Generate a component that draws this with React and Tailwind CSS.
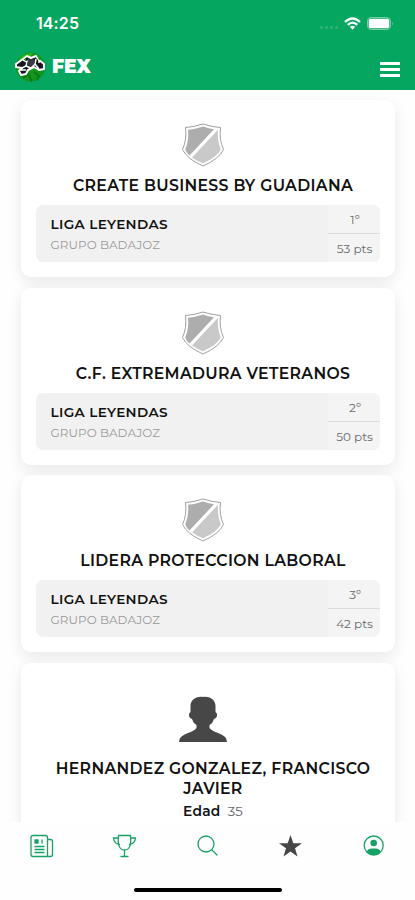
import React from "react";

const teams = [
  { name: "CREATE BUSINESS BY GUADIANA", position: "1º", points: "53 pts" },
  { name: "C.F. EXTREMADURA VETERANOS", position: "2º", points: "50 pts" },
  { name: "LIDERA PROTECCION LABORAL", position: "3º", points: "42 pts" },
];

function Ball() {
  return (
    <svg className="h-8 w-8" viewBox="0 0 32 32">
      <circle cx="16.5" cy="16" r="14.5" fill="#14941b" />
      <path d="M5 8q5-7 14-6l-3 4-8 4zM23 4l6 8-5-3z" fill="#22b719" />
      <path d="M9 27l5-4 4 7M20 21l5 4-2 4" fill="none" stroke="#087a17" strokeWidth="2" />
      <path d="M2 13L9 8L13 5L17 7L22 5L25 9L30 13L30 18L25 19L20 16L14 19L12 23L7 24L5 20L8 17L2 16Z" fill="#17181f" stroke="#fff" strokeWidth="2" strokeLinejoin="round" />
      <path d="M9 9L13 11L12 15L6 18M13 11L15 9M22 8L21 13L25 18M21 13L17 17L12 15M7 19L12 19M25 9L25 12" fill="none" stroke="#fff" strokeWidth="1.5" />
      <path d="M14 9L17 8L21 9L20 13L17 15L13 14Z" fill="#3a3c43" />
      <path d="M23 5L25 4L27 9L25 9ZM10 9L12 7L12 10Z" fill="#17a01c" />
    </svg>
  );
}

function Shield() {
  return (
    <svg className="h-[44px] w-[44px]" viewBox="0 0 44 44">
      <path d="M4.5 4.5Q13 4 22 1Q31 4 39.5 4.5Q38 17 42.5 26.5Q38 36 22 43Q6 36 1.5 26.5Q6 17 4.5 4.5Z" fill="#fff" stroke="#a0a0a0" strokeWidth="1" />
      <path d="M7 6.7Q15 6 22 3.5Q28 5.5 33 6.2L8.5 32.5Q5.5 30 4.2 26.5Q8.2 17 7 6.7Z" fill="#adadad" />
      <path d="M37 6.7Q36 17 39.8 26.5Q36 34 22 40.3Q16 38 11 34.5Z" fill="#c9c9c9" />
    </svg>
  );
}

function TeamCard({ team }) {
  return (
    <article className="flex h-[177px] shrink-0 flex-col rounded-[10px] bg-white px-[15px] pt-[23px] shadow-[0_5px_16px_rgba(0,0,0,0.09)]">
      <div className="flex h-[44px] justify-center pr-[11px]"><Shield /></div>
      <h2 className="mt-[9px] h-5 whitespace-nowrap pl-[10px] text-center text-[15.7px] leading-5 font-semibold tracking-[0.33px] text-[#111]">{team.name}</h2>
      <div className="mt-[9px] flex h-[57px] w-[344px] overflow-hidden rounded-[7px] bg-[#f1f1f1]">
        <div className="flex flex-1 flex-col pt-[9px] pl-[14.5px]">
          <span className="text-[13.6px] leading-[20px] font-semibold tracking-[0.35px] text-[#111]">LIGA LEYENDAS</span>
          <span className="mt-[2px] text-[11.9px] leading-[18px] tracking-[0.1px] text-[#999]">GRUPO BADAJOZ</span>
        </div>
        <div className="flex w-[52px] flex-col bg-[#f4f4f4] text-center text-[12px] text-[#686868]">
          <span className="h-[29px] border-b border-[#dcdcdc] pl-[2px] leading-[29px]">{team.position}</span>
          <span className="h-[28px] pl-px leading-[29px]">{team.points}</span>
        </div>
      </div>
    </article>
  );
}

function Header() {
  return (
    <header className="h-[90px] shrink-0 bg-[#04a660] text-white">
      <div className="flex h-[46px] items-center justify-between pr-[21px] pl-[36px]">
        <span className="font-['Inter',sans-serif] text-[16px] font-semibold tracking-[0.1px]">14:25</span>
        <div className="flex items-center">
          <div className="mt-2 mr-[6px] flex gap-[2px]">
            {[0, 1, 2, 3].map((dot) => <i key={dot} className="h-[3px] w-[3px] rounded-full bg-[#32b57a]" />)}
          </div>
          <svg className="h-[13px] w-[17px]" viewBox="0 0 17 13">
            <path d="M1 5Q8.5-2 16 5M3.8 7.8Q8.5 3.5 13.2 7.8" fill="none" stroke="#fff" strokeWidth="2.3" />
            <path d="M5.8 9.8Q8.5 7.7 11.2 9.8L8.5 12.7Z" fill="#fff" />
          </svg>
          <svg className="ml-[6px] h-[13px] w-[27px]" viewBox="0 0 27 13">
            <rect x="0.5" y="0.5" width="23" height="12" rx="3.5" fill="none" stroke="#74cda5" />
            <rect x="1.7" y="1.7" width="20.6" height="9.6" rx="2" fill="#fff" />
            <path d="M25 4.5q1.5 2 0 4z" fill="#74cda5" />
          </svg>
        </div>
      </div>
      <div className="flex h-[42px] items-center justify-between pr-[15px] pl-[14px]">
        <div className="flex items-center gap-[6px]">
          <Ball />
          <span className="mt-px text-[18.7px] font-black">FEX</span>
        </div>
        <div className="mt-[5px] flex w-5 flex-col gap-[3px]">
          <i className="h-[3px] bg-white" /><i className="h-[3px] bg-white" /><i className="h-[3px] bg-white" />
        </div>
      </div>
    </header>
  );
}

function BottomNav() {
  const line = { fill: "none", stroke: "#16a365", strokeWidth: 1.3, strokeLinejoin: "round", strokeLinecap: "round" };
  return (
    <footer className="flex h-[78px] shrink-0 flex-col items-center bg-[#fefefe]">
      <nav className="flex h-[47px] w-full items-center justify-between pr-[28px] pl-[29px]">
        <svg className="h-6 w-[26px]" viewBox="0 0 26 24" {...line}>
          <path d="M18.5 22.5H4Q2 22.5 2 20.5V3.5Q2 1.5 4 1.5H16.5Q18.5 1.5 18.5 3.5V22.5H21.5Q23.5 22.5 23.5 20.5V7.5Q23.5 5.5 21.5 5.5H18.5M13 6V9M6 12.5H15M6 15.5H15M6 18.5H15" />
          <rect x="6" y="6" width="3" height="3" fill="#16a365" />
        </svg>
        <svg className="h-6 w-[26px]" viewBox="0 0 26 24" {...line}>
          <path d="M6.5 1.5H18.5Q20 16 12.5 16Q5 16 6.5 1.5ZM6.5 4H1.5Q2 9.5 7.5 10.5M18.5 4H23.5Q23 9.5 17.5 10.5M12.5 16V22.5M9 22.5H16" />
        </svg>
        <svg className="h-6 w-[26px]" viewBox="0 0 26 24" {...line}>
          <circle cx="11" cy="10" r="8" /><path d="M17 16L22 21" />
        </svg>
        <svg className="h-6 w-[26px]" viewBox="0 0 26 24">
          <path d="M12.5 1L15.3 9.2H24L17 14.2L19.5 22.5L12.5 17.6L5.5 22.5L8 14.2L1 9.2H9.7Z" fill="#454545" />
        </svg>
        <svg className="h-6 w-[26px]" viewBox="0 0 26 24">
          <circle cx="12.7" cy="11.5" r="9.5" fill="none" stroke="#16a365" strokeWidth="1.3" />
          <circle cx="12.7" cy="9" r="3.3" fill="#16a365" />
          <path d="M5.7 17.5Q7.2 14.5 10.7 14.5H14.7Q18.2 14.5 19.7 17.5Q16.7 21 12.7 21Q8.7 21 5.7 17.5Z" fill="#16a365" />
        </svg>
      </nav>
      <div className="mt-[19px] h-1 w-[148px] rounded-full bg-black" />
    </footer>
  );
}

export default function App() {
  return (
    <div className="flex h-[900px] w-[415px] flex-col overflow-hidden bg-white font-['Montserrat','Inter',sans-serif]">
      <Header />
      <main className="flex min-h-0 flex-1 flex-col gap-[10.6px] overflow-hidden bg-[#fefefe] pr-5 pl-[21px] pt-[10px]">
        {teams.map((team) => <TeamCard key={team.name} team={team} />)}
        <article className="flex h-[220px] shrink-0 flex-col rounded-[10px] bg-white px-[15px] pt-[33px] shadow-[0_5px_16px_rgba(0,0,0,0.09)]">
          <div className="flex h-[47px] justify-center pr-[11px]">
            <svg className="h-[47px] w-[50px]" viewBox="0 0 50 47">
              <path d="M25 1C17 0 12.5 5 12.5 10V16Q10.5 17 11 20Q12 23 14 23Q15 27 18.5 29V32Q16 35 10 37Q1 40 1 46H49Q49 40 40 37Q34 35 31.5 32V29Q35 27 36 23Q38 23 39 20Q39.5 17 37.5 16V10C37.5 5 33 0 25 1Z" fill="#474747" />
            </svg>
          </div>
          <h2 className="mt-[16px] pl-[10px] text-center text-[15.7px] leading-5 font-semibold tracking-[0.33px] whitespace-nowrap text-[#111]">HERNANDEZ GONZALEZ, FRANCISCO<br />JAVIER</h2>
          <p className="mt-[3px] pl-[10px] text-center text-[13.8px] leading-[18px] text-[#686868]"><b className="mr-[7px] font-semibold tracking-[0.2px] text-[#111]">Edad</b>35</p>
        </article>
      </main>
      <BottomNav />
    </div>
  );
}
